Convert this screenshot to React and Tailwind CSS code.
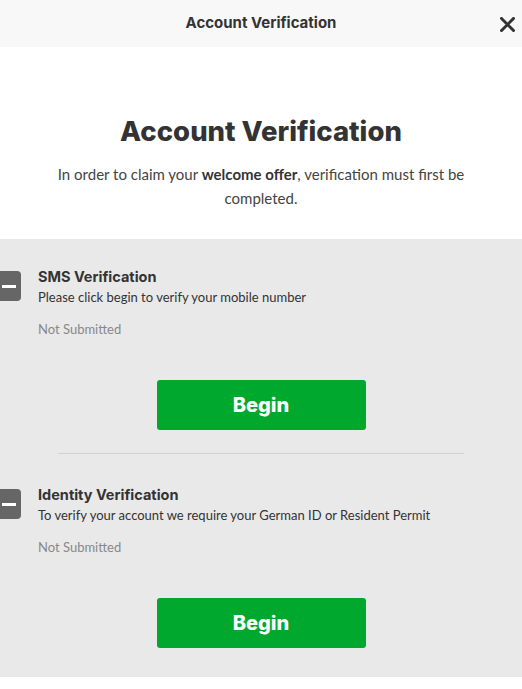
import React from "react";

const H = { fontFamily: "Inter, 'Noto Sans', sans-serif" };

function Section({ title, desc, last }) {
  return (
    <div className="flex flex-col">
      <div className={`flex items-start ${last ? "pt-[31px]" : "pt-[28px]"}`}>
        <div className="w-[21px] h-[30px] bg-[#666666] rounded-r-[4px] flex items-center pl-[2px] shrink-0 mt-[4px]">
          <div className="w-[14px] h-[3px] bg-white"></div>
        </div>
        <div className="ml-[17px] flex flex-col">
          <div className="text-[14.5px] font-bold text-[#333333] leading-[20px]" style={H}>{title}</div>
          <div className="text-[13px] text-[#333333] leading-[20px]">{desc}</div>
          <div className="text-[13px] text-[#888888] leading-[20px] mt-[12px]">Not Submitted</div>
        </div>
      </div>
      <div className="flex justify-center mt-[41px]">
        <button className="w-[209px] h-[50px] bg-[#00a82d] rounded-[3px] text-white font-extrabold text-[20px]" style={H}>
          Begin
        </button>
      </div>
      {!last && (
        <div className="mx-[58px] mt-[23px] h-px bg-[#d2d2d2]"></div>
      )}
    </div>
  );
}

export default function App() {
  return (
    <div className="w-[522px] h-[689px] bg-white flex flex-col" style={{ fontFamily: "Lato, 'Noto Sans', sans-serif" }}>
      <div className="h-[47px] bg-[#f8f8f8] flex items-center justify-center relative shrink-0">
        <div className="text-[15px] font-bold text-[#333333]" style={H}>Account Verification</div>
        <svg className="absolute right-[7px] top-[17px]" width="15" height="15" viewBox="0 0 15 15">
          <path d="M1.5 1.5 L13.5 13.5 M13.5 1.5 L1.5 13.5" stroke="#333333" strokeWidth="3" strokeLinecap="square" />
        </svg>
      </div>
      <div className="h-[192px] flex flex-col items-center shrink-0">
        <h1 className="mt-[67px] text-[27.5px] font-extrabold text-[#333333] leading-[34px]" style={H}>Account Verification</h1>
        <p className="mt-[14px] text-[15px] text-[#444444] leading-[24px] text-center px-[56px]">
          In order to claim your <b className="font-bold text-[#333333]">welcome offer</b>, verification must first be completed.
        </p>
      </div>
      <div className="bg-[#e9e9e9] h-[438px] shrink-0">
        <Section title="SMS Verification" desc="Please click begin to verify your mobile number" />
        <Section title="Identity Verification" desc="To verify your account we require your German ID or Resident Permit" last />
      </div>
    </div>
  );
}
